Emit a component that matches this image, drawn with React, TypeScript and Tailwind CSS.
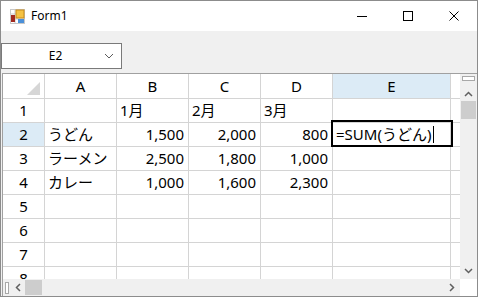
import React from 'react';

const font = "font-['Noto_Sans','Noto_Sans_CJK_JP',sans-serif]";

type Cell = { v: string; num?: boolean };

const rows: { h: string; cells: Cell[] }[] = [
  { h: '1', cells: [{ v: '' }, { v: '1月' }, { v: '2月' }, { v: '3月' }, { v: '' }] },
  { h: '2', cells: [{ v: 'うどん' }, { v: '1,500', num: true }, { v: '2,000', num: true }, { v: '800', num: true }, { v: '=SUM(うどん)' }] },
  { h: '3', cells: [{ v: 'ラーメン' }, { v: '2,500', num: true }, { v: '1,800', num: true }, { v: '1,000', num: true }, { v: '' }] },
  { h: '4', cells: [{ v: 'カレー' }, { v: '1,000', num: true }, { v: '1,600', num: true }, { v: '2,300', num: true }, { v: '' }] },
  { h: '5', cells: [{ v: '' }, { v: '' }, { v: '' }, { v: '' }, { v: '' }] },
  { h: '6', cells: [{ v: '' }, { v: '' }, { v: '' }, { v: '' }, { v: '' }] },
  { h: '7', cells: [{ v: '' }, { v: '' }, { v: '' }, { v: '' }, { v: '' }] },
  { h: '8', cells: [{ v: '' }, { v: '' }, { v: '' }, { v: '' }, { v: '' }] },
];

const colW = ['w-[72px]', 'w-[72px]', 'w-[72px]', 'w-[72px]', 'w-[118px]'];
const colNames = ['A', 'B', 'C', 'D', 'E'];

function AppIcon() {
  return (
    <svg width="15" height="15" viewBox="0 0 15 15">
      <rect x="0.5" y="0.5" width="14" height="14" fill="#ffffff" stroke="#c8c8c8" />
      <line x1="0" y1="5" x2="15" y2="5" stroke="#c8c8c8" />
      <line x1="0" y1="10" x2="15" y2="10" stroke="#c8c8c8" />
      <line x1="5" y1="0" x2="5" y2="15" stroke="#c8c8c8" />
      <rect x="6" y="1" width="8" height="8" fill="#f5c242" stroke="#c88a18" />
      <rect x="8" y="10" width="6" height="4" fill="#4a90d9" />
      <rect x="1" y="6" width="4" height="7" fill="#a3291f" />
    </svg>
  );
}

export default function App() {
  return (
    <div className={`w-[478px] h-[297px] border border-[#8c8c8c] bg-[#f0f0f0] flex flex-col overflow-hidden ${font}`}>
      {/* Title bar */}
      <div className="h-[30px] bg-white flex items-center shrink-0">
        <div className="ml-[9px] mt-[1px]">
          <AppIcon />
        </div>
        <span className="ml-[6px] text-[12px] text-black">Form1</span>
        <div className="ml-auto flex h-full">
          <div className="w-[46px] flex items-center justify-center">
            <div className="w-[10px] h-[1px] bg-black" />
          </div>
          <div className="w-[46px] flex items-center justify-center">
            <div className="w-[10px] h-[10px] border border-black" />
          </div>
          <div className="w-[46px] flex items-center justify-center">
            <svg width="10" height="10" viewBox="0 0 10 10">
              <path d="M0.5 0.5 L9.5 9.5 M9.5 0.5 L0.5 9.5" stroke="#000" strokeWidth="1" />
            </svg>
          </div>
        </div>
      </div>

      {/* Toolbar */}
      <div className="pt-[12px] pb-[4px] shrink-0">
        <div className="w-[121px] h-[26px] border border-[#7a7a7a] bg-white flex items-center">
          <span className="flex-1 text-center text-[12px] text-black pl-[8px]">E2</span>
          <svg width="18" height="10" viewBox="0 0 18 10" className="mr-[2px]">
            <path d="M4 3 L8 7 L12 3" fill="none" stroke="#5c5c5c" strokeWidth="1" />
          </svg>
        </div>
      </div>

      {/* Grid */}
      <div className="flex-1 ml-[1px] border-l border-t border-[#a0a0a0] bg-white flex flex-col min-h-0">
        <div className="flex flex-1 min-h-0">
          <div className="relative flex-1 overflow-hidden text-[15px] text-black leading-none">
            {/* header row */}
            <div className="flex h-[25px] border-b border-[#d4d4d4]">
              <div className="w-[42px] border-r border-[#d4d4d4] relative shrink-0">
                <svg width="13" height="13" viewBox="0 0 13 13" className="absolute right-[4px] bottom-[3px]">
                  <path d="M13 0 L13 13 L0 13 Z" fill="#d6d6d6" />
                </svg>
              </div>
              {colNames.map((c, i) => (
                <div
                  key={c}
                  className={`${colW[i]} shrink-0 border-r border-[#d4d4d4] flex items-center justify-center ${c === 'E' ? 'bg-[#dcebf6]' : ''}`}
                >
                  {c}
                </div>
              ))}
            </div>
            {rows.map((r) => (
              <div key={r.h} className="flex h-[24px] border-b border-[#d4d4d4]">
                <div className={`w-[42px] shrink-0 border-r border-[#d4d4d4] flex items-center justify-center ${r.h === '2' ? 'bg-[#dcebf6]' : ''}`}>
                  {r.h}
                </div>
                {r.cells.map((c, i) => (
                  <div
                    key={i}
                    className={`${colW[i]} shrink-0 border-r border-[#d4d4d4] flex items-center whitespace-nowrap ${c.num ? 'justify-end pr-[4px]' : 'pl-[3px]'}`}
                  >
                    {c.v}
                    {r.h === '2' && i === 4 && <span className="w-[1px] h-[17px] bg-black ml-[2px]" />}
                  </div>
                ))}
              </div>
            ))}
            {/* active cell */}
            <div className="absolute left-[328px] top-[46px] w-[122px] h-[27px] border-2 border-black pointer-events-none" />
          </div>

          {/* vertical scrollbar */}
          <div className="w-[17px] bg-[#f0f0f0] flex flex-col items-center shrink-0">
            <div className="mt-[2px] w-[13px] h-[5px] border border-[#a8a8a8] bg-white" />
            <svg width="9" height="6" viewBox="0 0 9 6" className="mt-[10px]">
              <path d="M1 5 L4.5 1.5 L8 5" fill="none" stroke="#606060" strokeWidth="1.5" />
            </svg>
            <div className="mt-[4px] w-[15px] h-[18px] bg-[#cdcdcd]" />
            <div className="flex-1" />
            <svg width="9" height="6" viewBox="0 0 9 6" className="mb-[5px]">
              <path d="M1 1 L4.5 4.5 L8 1" fill="none" stroke="#606060" strokeWidth="1.5" />
            </svg>
          </div>
        </div>

        {/* horizontal scrollbar */}
        <div className="flex h-[17px] shrink-0">
          <div className="flex-1 bg-[#f0f0f0] flex items-center">
            <div className="ml-[2px] w-[4px] h-[12px] border border-[#a8a8a8] bg-white" />
            <svg width="6" height="9" viewBox="0 0 6 9" className="ml-[6px]">
              <path d="M5 1 L1.5 4.5 L5 8" fill="none" stroke="#606060" strokeWidth="1.5" />
            </svg>
            <div className="ml-[4px] w-[17px] h-[15px] bg-[#cdcdcd]" />
            <div className="flex-1" />
            <svg width="6" height="9" viewBox="0 0 6 9" className="mr-[5px]">
              <path d="M1 1 L4.5 4.5 L1 8" fill="none" stroke="#606060" strokeWidth="1.5" />
            </svg>
          </div>
          <div className="w-[17px] bg-white" />
        </div>
      </div>
    </div>
  );
}
